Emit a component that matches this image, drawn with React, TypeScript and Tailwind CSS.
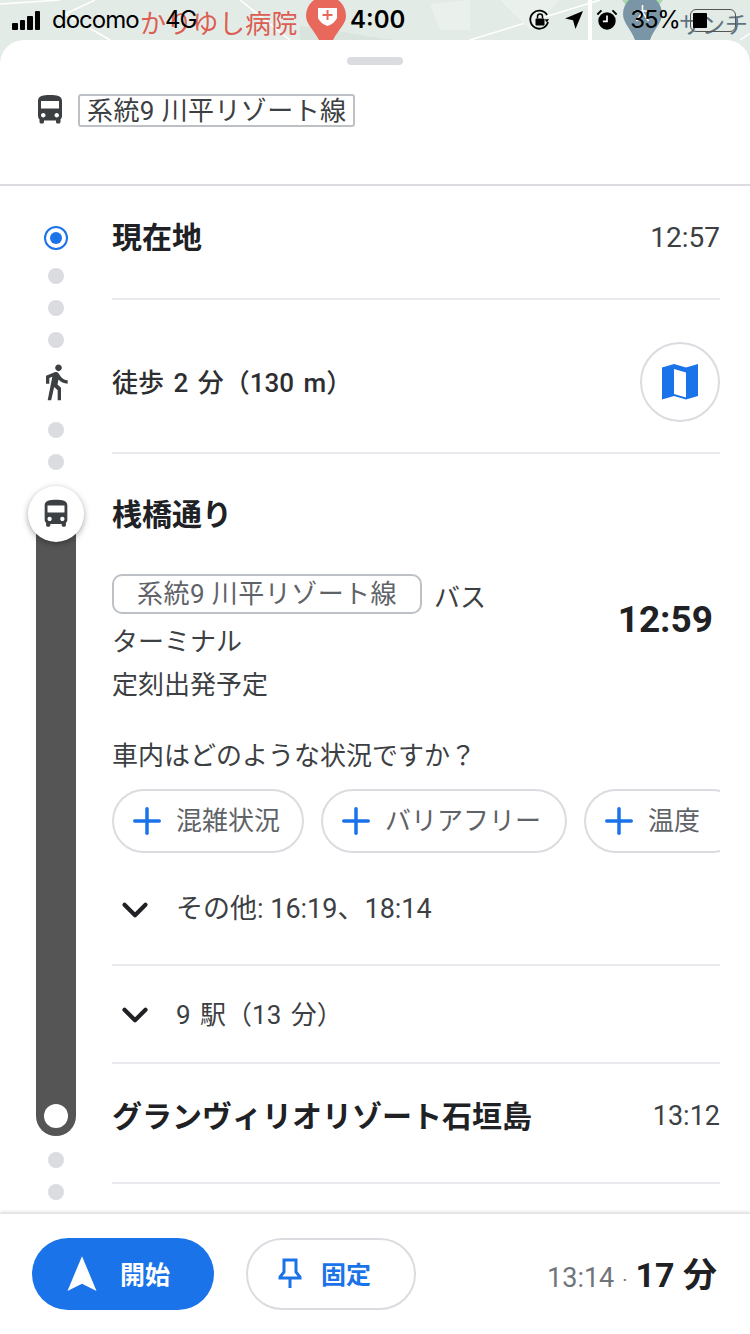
import React from 'react';
import { ChevronDown, Plus } from 'lucide-react';

const font = { fontFamily: 'Roboto, "Noto Sans CJK JP", sans-serif' };

const BusIcon = ({ className }: { className: string }) => (
  <svg viewBox="0 0 24 24" className={className} fill="#3c4043">
    <path d="M4 16c0 .88.39 1.67 1 2.22V20c0 .55.45 1 1 1h1c.55 0 1-.45 1-1v-1h8v1c0 .55.45 1 1 1h1c.55 0 1-.45 1-1v-1.78c.61-.55 1-1.34 1-2.22V6c0-3.5-3.58-4-8-4s-8 .5-8 4v10zm3.5 1c-.83 0-1.5-.67-1.5-1.5S6.67 14 7.5 14s1.500.67 1.500 1.500S8.330 17 7.500 17zm9 0c-.83 0-1.5-.67-1.5-1.500s.67-1.500 1.500-1.500 1.500.67 1.500 1.500-.67 1.500-1.500 1.500zM18 11H6V6h12v5z" />
  </svg>
);

const Dot = ({ className = '' }: { className?: string }) => (
  <div className={`h-4 w-4 rounded-full bg-[#dadce0] ${className}`}></div>
);

const Chip = ({ label, className = '' }: { label: string; className?: string }) => (
  <div className={`flex h-[64px] shrink-0 items-center rounded-full border-2 border-[#dadce0] pl-[12px] ${className}`}>
    <Plus className="h-[42px] w-[42px] shrink-0 text-[#1a73e8]" strokeWidth={2} />
    <span className="ml-[8px] whitespace-nowrap text-[26px] text-[#5f6368]">{label}</span>
  </div>
);

const StatusBar = () => (
  <div className="relative h-[40px] overflow-hidden bg-[#e3ebe6]">
    {/* map behind the status bar */}
    <svg viewBox="0 0 750 40" className="absolute inset-0 h-full w-full">
      <path d="M0 4L60 0M95 0L65 14L110 40M240 0L290 40M470 40L600 0M800 0L740 40" stroke="#fff" strokeWidth="1.500" fill="none" />
      <path d="M590 0V40" stroke="#fff" strokeWidth="4" fill="none" />
      <path d="M300 26C340 30 380 40 400 40H300z" fill="#d9e4de" />
      <path d="M500 0h60l-30 30zM430 4l40-4v30h-30z" fill="#eaf0ec" />
      <path d="M622 0h41l-6 8h-29z" fill="#a8d8ac" />
      <path d="M306 16a20 20 0 0 1 40 0c0 8-8 14-13 24h-14c-5-10-13-16-13-24z" fill="#e8695c" />
      <path d="M318 8h19v10q-2 5-9.500 8q-7.500-3-9.500-8z" fill="#fff" />
      <path d="M322.500 15h10M327.500 10v10" stroke="#e8695c" strokeWidth="2" />
      <path d="M623 14a19.500 19.500 0 0 1 39 0c0 9-8 15-12 26h-15c-4-11-12-17-12-26z" fill="#7a95a6" />
      <path d="M634 11h17M642.500 5v7l-6 9M642.500 12l6 9" stroke="#fff" strokeWidth="1.500" fill="none" />
    </svg>
    <span className="absolute left-[140px] top-[5px] whitespace-nowrap text-[26px] leading-[38px] tracking-[0.3px] text-[#db4a3f]/90" style={font}>かりゆし病院</span>
    <span className="absolute left-[679px] top-[7px] whitespace-nowrap text-[23px] leading-[38px] text-[#5f7480]" style={font}>サンチ</span>

    <div className="relative flex h-[40px] items-center pl-[12px] text-[24px] text-black" style={{ fontFamily: 'Inter, sans-serif' }}>
      <div className="flex w-[34px] items-end gap-[2px]">
        <div className="h-[7px] w-[5.500px] rounded-[1px] bg-black"></div>
        <div className="h-[10px] w-[5.500px] rounded-[1px] bg-black"></div>
        <div className="h-[14px] w-[5.500px] rounded-[1px] bg-black"></div>
        <div className="h-[19px] w-[5.500px] rounded-[1px] bg-black"></div>
      </div>
      <span className="ml-[6px] w-[113px] tracking-[-1px]">docomo</span>
      <span className="w-[185px] tracking-[-1px]">4G</span>
      <span className="font-semibold">4:00</span>
      <svg viewBox="0 0 24 24" className="ml-[123px] h-[24px] w-[24px] shrink-0" fill="none">
        <path d="M20 14a9 9 0 1 1-1-7" stroke="#000" strokeWidth="1.800" />
        <path d="M21 11l-2 3.500-2.500-3z" fill="#000" />
        <rect x="7.500" y="10.500" width="9" height="7" rx="1" fill="#000" />
        <path d="M9.500 10.500V8.500a2.500 2.500 0 0 1 5 0v2" stroke="#000" strokeWidth="1.500" />
      </svg>
      <svg viewBox="0 0 20 20" className="ml-[12px] h-[20px] w-[20px] shrink-0">
        <path d="M19 1L1 8.500l8 1.700L11.500 19z" fill="#000" />
      </svg>
      <svg viewBox="0 0 24 24" className="ml-[12px] h-[22px] w-[22px] shrink-0">
        <circle cx="12" cy="13" r="9.500" fill="#000" />
        <path d="M12 7v6.500H7.500" stroke="#fff" strokeWidth="1.800" fill="none" />
        <path d="M1.500 6L6 1.500M22.500 6L18 1.500" stroke="#000" strokeWidth="2" />
      </svg>
      <span className="ml-[12px] tracking-[-1.2px]">35%</span>
      <div className="ml-[10px] flex h-[23px] w-[46px] shrink-0 items-center rounded-[6px] border border-[#555] p-[2px]">
        <div className="h-[15px] w-[14px] rounded-[1px] bg-black"></div>
      </div>
    </div>
  </div>
);

const Rail = () => (
  <div className="flex w-[112px] shrink-0 flex-col items-center">
    <div className="mt-[40px] flex h-[24px] w-[24px] items-center justify-center rounded-full border-2 border-[#1a73e8]">
      <div className="h-[12px] w-[12px] rounded-full bg-[#1a73e8]"></div>
    </div>
    <Dot className="mt-[18px]" />
    <Dot className="mt-[16px]" />
    <Dot className="mt-[16px]" />
    <svg viewBox="0 0 24 24" className="mt-[14px] h-[40px] w-[40px] shrink-0" fill="#3c4043">
      <path d="M13.500 5.500c1.100 0 2-.9 2-2s-.9-2-2-2-2 .9-2 2 .9 2 2 2zM9.800 8.900L7 23h2.100l1.800-8 2.100 2v6h2v-7.500l-2.100-2 .6-3C14.800 12 16.800 13 19 13v-2c-1.900 0-3.500-1-4.300-2.400l-1-1.600c-.4-.6-1-1-1.700-1-.3 0-.5.100-.8.100L6 8.300V13h2V9.600l1.800-.7z" />
    </svg>
    <Dot className="mt-[20px]" />
    <Dot className="mt-[16px]" />
    <div className="relative mt-[16px] flex w-[40px] flex-col items-center">
      <div className="relative z-10 flex h-[56px] w-[56px] shrink-0 items-center justify-center rounded-full bg-white shadow-[0_2px_6px_rgba(0,0,0,0.35)]">
        <BusIcon className="h-[34px] w-[34px]" />
      </div>
      <div className="mt-[-28px] flex h-[622px] w-[40px] shrink-0 items-end justify-center rounded-b-[20px] bg-[#555555] pb-[8px]">
        <div className="h-[24px] w-[24px] rounded-full bg-white"></div>
      </div>
    </div>
    <Dot className="mt-[16px]" />
    <Dot className="mt-[16px]" />
  </div>
);

const Details = () => (
  <div className="flex min-w-0 flex-1 flex-col pr-[30px] text-[#202124]" style={font}>
    <div className="flex h-[114px] shrink-0 items-center justify-between border-b-2 border-[#e8eaed] pb-[8px]">
      <span className="text-[30px] font-bold leading-none">現在地</span>
      <span className="text-[28px] text-[#3c4043]">12:57</span>
    </div>
    <div className="flex h-[154px] shrink-0 items-center justify-between border-b-2 border-[#e8eaed] pt-[12px]">
      <span className="pt-[3px] text-[26px] font-medium text-[#2d2e31] [word-spacing:3px]">徒歩 2 分（130 m）</span>
      <div className="flex h-[80px] w-[80px] items-center justify-center rounded-full border-2 border-[#dadce0]">
        <svg viewBox="0 0 36 36" className="h-[36px] w-[36px]" fill="#1a73e8">
          <path fillRule="evenodd" d="M0 3.500L12 0l12 3.500L36 0v32l-12 3.500L12 32 0 35.500zM12 5v25l12 3.500v-25z" />
        </svg>
      </div>
    </div>

    <div className="mt-[42px] text-[30px] font-bold leading-[38px]">桟橋通り</div>

    <div className="mt-[40px] flex items-start justify-between">
      <div className="w-[400px] text-[26px] leading-[44px] text-[#3c4043]">
        <span className="mr-[12px] inline-flex h-[40px] -translate-y-[4px] items-center rounded-[10px] border-2 border-[#bdc1c6] px-[23px] align-middle text-[26px] leading-none tracking-[0.45px] text-[#5f6368]">系統9 川平リゾート線</span>
        <span className="align-middle">バス</span>
        <div>ターミナル</div>
        <div className="-mt-[1px]">定刻出発予定</div>
      </div>
      <span className="mr-[7px] mt-[27px] text-[37px] font-bold leading-none">12:59</span>
    </div>

    <div className="mt-[27px] text-[26px] leading-[44px] text-[#3c4043]">車内はどのような状況ですか？</div>

    <div className="mt-[11px] flex shrink-0 gap-[17px] overflow-hidden">
      <Chip label="混雑状況" className="w-[192px]" />
      <Chip label="バリアフリー" className="w-[246px]" />
      <Chip label="温度" className="w-[160px]" />
    </div>

    <div className="flex h-[113px] shrink-0 items-center border-b-2 border-[#e8eaed] pt-[2px]">
      <ChevronDown className="ml-[2px] h-[42px] w-[42px] text-[#202124]" strokeWidth={2.4} />
      <span className="ml-[20px] text-[27px] text-[#3c4043]">その他: 16:19、18:14</span>
    </div>
    <div className="flex h-[98px] shrink-0 items-center border-b-2 border-[#e8eaed] pt-[2px]">
      <ChevronDown className="ml-[2px] h-[42px] w-[42px] text-[#202124]" strokeWidth={2.4} />
      <span className="ml-[20px] text-[26px] text-[#3c4043] [word-spacing:3px]">9 駅（13 分）</span>
    </div>
    <div className="flex h-[120px] shrink-0 items-center justify-between border-b-2 border-[#e8eaed] pb-[14px]">
      <span className="text-[30px] font-bold">グランヴィリオリゾート石垣島</span>
      <span className="text-[27px] text-[#3c4043]">13:12</span>
    </div>
  </div>
);

const BottomBar = () => (
  <div className="relative z-20 flex h-[121px] shrink-0 items-center border-t border-[#e3e3e3] bg-white pl-[32px] pr-[33px] shadow-[0_-1px_3px_rgba(0,0,0,0.15)]" style={font}>
    <div className="flex h-[72px] w-[182px] items-center rounded-full bg-[#1a73e8] pl-[35px]">
      <svg viewBox="0 0 32 38" className="h-[38px] w-[30px]">
        <path d="M16 0l15.500 37-15.500-7.500L.5 37z" fill="#fff" />
      </svg>
      <span className="ml-[23px] pt-[4px] text-[25px] font-bold text-white">開始</span>
    </div>
    <div className="ml-[32px] flex h-[72px] w-[170px] items-center rounded-full border-2 border-[#dadce0] pl-[30px]">
      <svg viewBox="0 0 24 32" className="h-[32px] w-[24px]" fill="none" stroke="#1a73e8" strokeWidth="3">
        <path d="M6 2h12v12l4 5v1H2v-1l4-5zM12 20v10" />
      </svg>
      <span className="ml-[19px] pt-[4px] text-[25px] font-bold text-[#1a73e8]">固定</span>
    </div>
    <div className="ml-auto flex items-baseline pt-[2px]">
      <span className="text-[27px] text-[#70757a]">13:14</span>
      <span className="mx-[8px] text-[20px] text-[#70757a]">·</span>
      <span className="text-[34px] font-bold text-[#202124]">17 分</span>
    </div>
  </div>
);

const App = () => {
  return (
    <div className="flex h-[1334px] w-[750px] flex-col overflow-hidden bg-[#e3ebe6]">
      <StatusBar />
      <div className="flex min-h-0 flex-1 flex-col overflow-hidden rounded-t-[24px] bg-white">
        <div className="flex h-[146px] shrink-0 flex-col border-b-2 border-[#dadce0]">
          <div className="mx-auto mt-[17px] h-[8px] w-[56px] rounded-full bg-[#dadce0]"></div>
          <div className="mt-[27px] flex items-center pl-[32px]" style={font}>
            <BusIcon className="h-[36px] w-[36px]" />
            <span className="ml-[10px] flex h-[33px] items-center rounded-[3px] border-2 border-[#bdc1c6] px-[7px] pt-[2px] text-[26px] leading-none tracking-[0.4px] text-[#3c4043]">系統9 川平リゾート線</span>
          </div>
        </div>
        <div className="flex min-h-0 flex-1 overflow-hidden">
          <Rail />
          <Details />
        </div>
        <BottomBar />
      </div>
    </div>
  );
};

export default App;
